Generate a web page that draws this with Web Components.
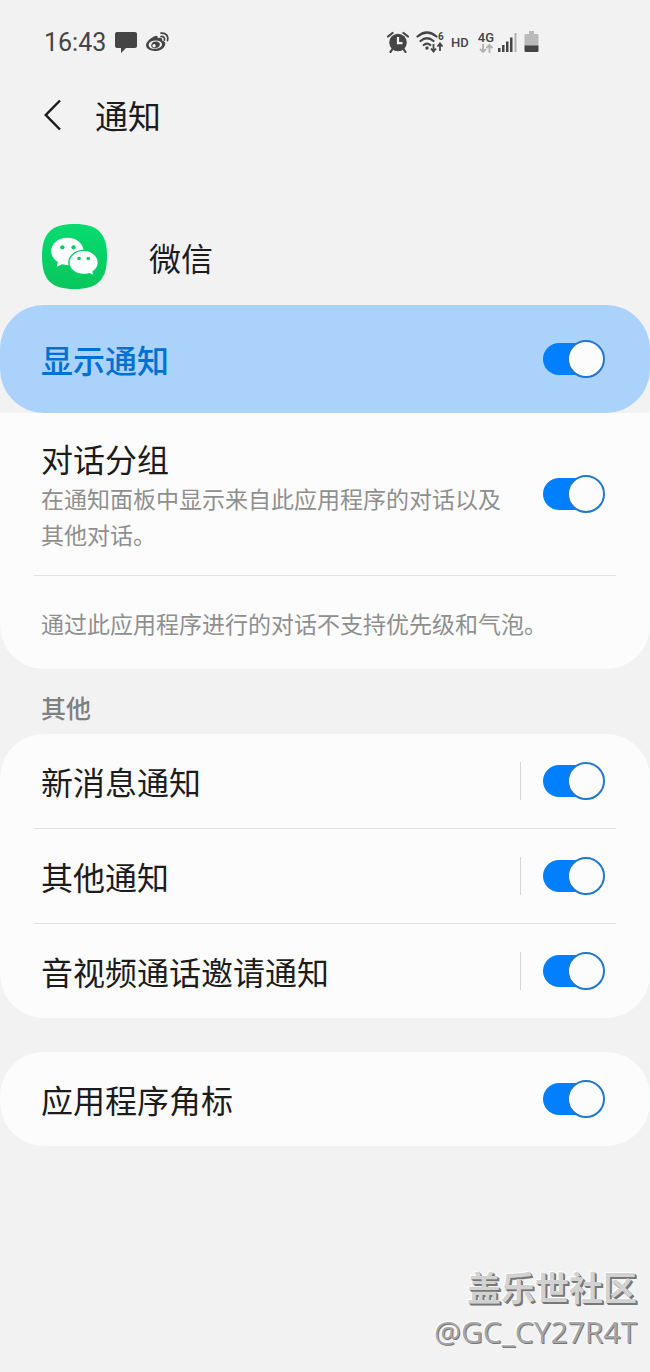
<!DOCTYPE html>
<html lang="zh-CN">
<head>
<meta charset="UTF-8">
<meta name="viewport" content="width=device-width, initial-scale=1">
<title>通知</title>
<style>
  :root {
    --page: #f2f2f2;
    --card: #fcfcfc;
    --text: #1c1c1c;
    --muted: #8f8f8f;
    --line: #e2e2e2;
    --accent: #0080ff;
    --side: 41px;
    --radius: 44px;
  }

  body {
    margin: 0;
    background: var(--page);
    color: var(--text);
    font-family: "Noto Sans CJK SC", sans-serif;
  }
</style>
</head>
<body>
<notification-page>
  <status-bar slot="status" time="16:43"></status-bar>
  <page-header slot="header">通知</page-header>
  <app-title>微信</app-title>

  <settings-card joined>
    <toggle-row main>显示通知</toggle-row>
    <toggle-row tall>
      对话分组
      <span slot="hint">在通知面板中显示来自此应用程序的对话以及其他对话。</span>
    </toggle-row>
    <card-note>通过此应用程序进行的对话不支持优先级和气泡。</card-note>
  </settings-card>

  <section-label>其他</section-label>
  <settings-card>
    <toggle-row divided>新消息通知</toggle-row>
    <toggle-row divided>其他通知</toggle-row>
    <toggle-row divided>音视频通话邀请通知</toggle-row>
  </settings-card>

  <settings-card spaced>
    <toggle-row>应用程序角标</toggle-row>
  </settings-card>

  <community-mark slot="footer" user="@GC_CY27R4T">盖乐世社区</community-mark>
</notification-page>

<script>
class NotificationPage extends HTMLElement {
  constructor() {
    super();
    this.attachShadow({ mode: 'open' }).innerHTML = `
      <style>
        :host {
          display: flex;
          flex-direction: column;
          min-height: 100vh;
        }
        footer {
          margin-top: auto;
        }
      </style>
      <slot name="status"></slot>
      <slot name="header"></slot>
      <main><slot></slot></main>
      <footer><slot name="footer"></slot></footer>
    `;
  }
}

class StatusBar extends HTMLElement {
  connectedCallback() {
    this.attachShadow({ mode: 'open' }).innerHTML = `
      <style>
        :host {
          display: flex;
          align-items: center;
          justify-content: space-between;
          height: 84px;
          padding: 0 111px 0 44px;
          color: #454545;
          font-family: Roboto, sans-serif;
        }
        .group {
          display: flex;
          align-items: center;
        }
        .left { gap: 9px; }
        .right { gap: 7px; }
        time { font-size: 25px; }
        svg { display: block; fill: currentColor; }
        .hd {
          font-size: 13px;
          font-weight: 500;
        }
        .net {
          display: flex;
          flex-direction: column;
          align-items: center;
          font-size: 13px;
          font-weight: 500;
          line-height: 13px;
        }
        .cell {
          display: flex;
          align-items: center;
          gap: 4px;
          margin-left: 2px;
        }
      </style>
      <div class="group left">
        <time>${this.getAttribute('time')}</time>
        <svg width="22" height="22" viewBox="0 0 22 22">
          <path d="M2 1h18q2 0 2 2v12q0 2-2 2H11l-5 5v-5H2q-2 0-2-2V3q0-2 2-2z"/>
        </svg>
        <svg width="24" height="22" viewBox="0 0 24 22">
          <path fill-rule="evenodd" d="M8.500 5.200C11 4 12.200 5 11.700 7.200c3-1 5-.5 4.500 2.200 2.600.8 3.600 2.300 2.900 4.500C18 17.500 13.800 20 9 20c-5 0-9-2.200-9-5.900C0 11.300 4.500 6.700 8.500 5.200zM9 9.500c-4 .3-6.500 2.400-6.300 4.700.2 2.400 3 3.900 6.800 3.600 4-.3 6.700-2.500 6.500-4.900-.3-2.300-3.200-3.700-7-3.400z"/>
          <path fill-rule="evenodd" d="M9.500 10.500c2.700-.3 4.700 1.200 4.400 3.300-.3 2-2.300 3.300-4.500 3.400-2.700.1-4.500-1.300-4.200-3.300.2-1.800 2-3.200 4.300-3.400zM8 13a1.700 1.700 0 1 0 .1 3.400A1.700 1.700 0 0 0 8 13z"/>
          <path d="M15 5.500c2.400-.4 4 1.300 3.500 3.600M15 2.200c4.700-.8 7.800 2.900 6.500 7.400" fill="none" stroke="currentColor" stroke-width="1.700" stroke-linecap="round"/>
        </svg>
      </div>
      <div class="group right">
        <svg width="22" height="22" viewBox="0 0 22 22">
          <path d="M1 5.500 5.500 2M21 5.500 16.500 2M5.500 18l-2 3M16.500 18l2 3" fill="none" stroke="currentColor" stroke-width="2.200" stroke-linecap="round"/>
          <circle cx="11" cy="11.500" r="8.800"/>
          <path d="M11 6v6.200h4.500" fill="none" stroke="#f2f2f2" stroke-width="2.200"/>
        </svg>
        <svg width="28" height="22" viewBox="0 0 28 22">
          <g fill="none" stroke="currentColor" stroke-width="2.200" stroke-linecap="round">
            <path d="M1.500 5.500q9.500-8 19 0M4.500 10q6.500-5.500 13 0M7.700 14q3.300-2.800 6.600 0"/>
          </g>
          <circle cx="11" cy="17" r="1.700"/>
          <path d="M17.500 13v7M15 17.500l2.500 3 2.500-3M24 20v-7M21.500 15.500l2.500-3 2.500 3" fill="none" stroke="currentColor" stroke-width="1.800"/>
          <text x="22" y="9" font-size="10" font-weight="700">6</text>
        </svg>
        <span class="hd">HD</span>
        <div class="cell">
          <div class="net">
            4G
            <svg width="14" height="9" viewBox="0 0 14 9">
              <path d="M4 0v8M1 5l3 3 3-3M10.500 9V1M7.500 4l3-3 3 3" fill="none" stroke="#b2b2b2" stroke-width="1.900"/>
            </svg>
          </div>
          <svg width="19" height="20" viewBox="0 0 19 20">
            <path d="M0 16h2.500v4H0zM4 13h2.500v7H4zM8 9.500h2.500V20H8zM12 5.500h2.500v14.500h-2.500z"/>
            <path d="M16.500 1h2v19h-2z" fill="#b2b2b2"/>
          </svg>
        </div>
        <svg width="15" height="22" viewBox="0 0 15 22">
          <path d="M5 0h5v3h3.500q1 0 1 1v11H.5V4q0-1 1-1H5z" fill="#bababa"/>
          <path d="M.5 14.500h14V20q0 1-1 1h-12q-1 0-1-1z"/>
        </svg>
      </div>
    `;
  }
}

class PageHeader extends HTMLElement {
  constructor() {
    super();
    this.attachShadow({ mode: 'open' }).innerHTML = `
      <style>
        :host {
          display: flex;
          align-items: center;
          gap: 22px;
          height: 62px;
          padding: 0 33px;
        }
        button {
          display: flex;
          align-items: center;
          justify-content: center;
          width: 40px;
          height: 48px;
          padding: 0;
          border: none;
          background: none;
          color: inherit;
        }
        svg {
          fill: none;
          stroke: currentColor;
          stroke-width: 2.500;
        }
        h1 {
          margin: 0;
          font-size: 33px;
          font-weight: 400;
          line-height: 48px;
        }
      </style>
      <button type="button" aria-label="返回">
        <svg width="18" height="32" viewBox="0 0 18 32"><path d="M16 1.500 1.800 16 16 30.500"/></svg>
      </button>
      <h1><slot></slot></h1>
    `;
  }
}

class AppTitle extends HTMLElement {
  constructor() {
    super();
    this.attachShadow({ mode: 'open' }).innerHTML = `
      <style>
        :host {
          display: flex;
          align-items: center;
          gap: 42px;
          padding: 78px 42px 16px;
        }
        h2 {
          margin: 0;
          font-size: 32px;
          font-weight: 400;
          line-height: 48px;
        }
      </style>
      <svg width="65" height="65" viewBox="0 0 64 64">
        <defs>
          <linearGradient id="green" x2="0" y2="1">
            <stop stop-color="#06dc70"/>
            <stop offset="1" stop-color="#08c65c"/>
          </linearGradient>
        </defs>
        <path d="M32 0C55 0 64 9 64 32S55 64 32 64 0 55 0 32 9 0 32 0z" fill="url(#green)"/>
        <path d="M25 13.500c9 0 16 6 16 13.500s-7 13.500-16 13.500c-2 0-3.700-.3-5.300-.8L14.500 42l1.200-4.500C11.700 35 9 31.300 9 27c0-7.500 7-13.500 16-13.500z" fill="#fff"/>
        <path d="M41 26c8 0 14.500 5.200 14.500 12 0 3.700-2 7-5.200 9.200l1 4-4.700-2.300c-1.700.6-3.600.9-5.600.9-8 0-14.500-5.200-14.500-11.800S33 26 41 26z" fill="#fff" stroke="#08cf66" stroke-width="1.400"/>
        <g fill="#08c964">
          <circle cx="20" cy="23" r="2.100"/><circle cx="31" cy="23" r="2.100"/>
          <circle cx="36.500" cy="34" r="1.800"/><circle cx="45.500" cy="34" r="1.800"/>
        </g>
      </svg>
      <h2><slot></slot></h2>
    `;
  }
}

class SettingsCard extends HTMLElement {
  constructor() {
    super();
    this.attachShadow({ mode: 'open' }).innerHTML = `
      <style>
        :host {
          display: block;
          border-radius: var(--radius);
          background: var(--card);
        }
        /* the main switch brings its own rounded top */
        :host([joined]) {
          border-radius: 0 0 var(--radius) var(--radius);
        }
        :host([spaced]) {
          margin-top: 34px;
        }
        ::slotted(:not(:first-child)) {
          --divider: 1px;
        }
        ::slotted([tall]) {
          --divider: 0px !important;
        }
      </style>
      <slot></slot>
    `;
  }
}

class ToggleRow extends HTMLElement {
  constructor() {
    super();
    this.attachShadow({ mode: 'open' }).innerHTML = `
      <style>
        :host {
          display: block;
        }
        :host([main]) {
          background: var(--page);
        }
        hr {
          height: var(--divider, 0px);
          margin: 0 34px;
          border: none;
          background: var(--line);
        }
        .row {
          display: flex;
          align-items: center;
          gap: 22px;
          min-height: 94px;
          padding: 0 45px 0 var(--side);
        }
        :host([main]) .row {
          min-height: 108px;
          border-radius: var(--radius);
          background: #abd2fa;
          color: #0070d2;
          font-weight: 500;
        }
        :host([tall]) .row {
          min-height: 162px;
        }
        .text {
          flex: 1;
        }
        label {
          display: block;
          font-size: 32px;
          line-height: 44px;
        }
        .hint {
          display: block;
          color: var(--muted);
          font-size: 23px;
          line-height: 36px;
        }
        :host(:not([tall])) .hint {
          display: none;
        }
        .bar {
          display: none;
          width: 1px;
          height: 38px;
          background: #d6d6d6;
        }
        :host([divided]) .bar {
          display: block;
        }
        input {
          appearance: none;
          display: grid;
          align-items: center;
          flex: none;
          width: 62px;
          height: 38px;
          margin: 0;
        }
        input::before,
        input::after {
          content: '';
          grid-area: 1 / 1;
          box-sizing: border-box;
        }
        input::before {
          width: 52px;
          height: 32px;
          border-radius: 16px;
          background: #b5b5b5;
        }
        input::after {
          width: 38px;
          height: 38px;
          border: 2px solid #9a9a9a;
          border-radius: 50%;
          background: #fcfcfc;
        }
        input:checked::before {
          background: var(--accent);
        }
        input:checked::after {
          justify-self: end;
          border-color: #2277cf;
        }
      </style>
      <hr>
      <div class="row">
        <div class="text">
          <label for="toggle"><slot></slot></label>
          <span class="hint"><slot name="hint"></slot></span>
        </div>
        <div class="bar"></div>
        <input id="toggle" type="checkbox" role="switch" checked>
      </div>
    `;
  }
}

class CardNote extends HTMLElement {
  constructor() {
    super();
    this.attachShadow({ mode: 'open' }).innerHTML = `
      <style>
        :host {
          display: block;
        }
        hr {
          height: 1px;
          margin: 0 34px;
          border: none;
          background: var(--line);
        }
        p {
          margin: 0;
          padding: 29px var(--side) 28px;
          color: var(--muted);
          font-size: 23px;
          line-height: 36px;
        }
      </style>
      <hr>
      <p><slot></slot></p>
    `;
  }
}

class SectionLabel extends HTMLElement {
  constructor() {
    super();
    this.attachShadow({ mode: 'open' }).innerHTML = `
      <style>
        :host {
          display: block;
          padding: 20px var(--side) 9px;
          color: #808080;
        }
        h3 {
          margin: 0;
          font-size: 25px;
          font-weight: 500;
          line-height: 36px;
        }
      </style>
      <h3><slot></slot></h3>
    `;
  }
}

class CommunityMark extends HTMLElement {
  connectedCallback() {
    this.attachShadow({ mode: 'open' }).innerHTML = `
      <style>
        :host {
          display: flex;
          flex-direction: column;
          align-items: flex-end;
          padding: 32px 13px 18px;
          color: #d2d2d2;
          text-shadow: 1px 1px 0 #777, 2px 2px 0 #777, -1px -1px 0 #fff;
        }
        strong {
          font-size: 34px;
          font-weight: 700;
          line-height: 46px;
        }
        span {
          color: #a6a6a6;
          font-family: "Open Sans", sans-serif;
          font-size: 30px;
          line-height: 44px;
          text-shadow: 1px 1px 0 #777, -1px -1px 0 #fff;
        }
      </style>
      <strong><slot></slot></strong>
      <span>${this.getAttribute('user')}</span>
    `;
  }
}

customElements.define('notification-page', NotificationPage);
customElements.define('status-bar', StatusBar);
customElements.define('page-header', PageHeader);
customElements.define('app-title', AppTitle);
customElements.define('settings-card', SettingsCard);
customElements.define('toggle-row', ToggleRow);
customElements.define('card-note', CardNote);
customElements.define('section-label', SectionLabel);
customElements.define('community-mark', CommunityMark);
</script>
</body>
</html>
